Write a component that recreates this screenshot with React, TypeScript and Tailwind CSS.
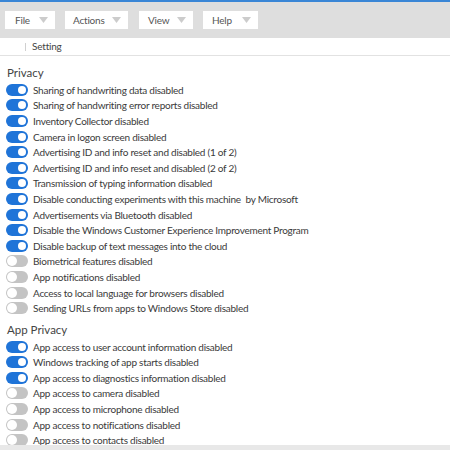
import React from "react";

const privacy: [string, boolean][] = [
  ["Sharing of handwriting data disabled", true],
  ["Sharing of handwriting error reports disabled", true],
  ["Inventory Collector disabled", true],
  ["Camera in logon screen disabled", true],
  ["Advertising ID and info reset and disabled (1 of 2)", true],
  ["Advertising ID and info reset and disabled (2 of 2)", true],
  ["Transmission of typing information disabled", true],
  ["Disable conducting experiments with this machine  by Microsoft", true],
  ["Advertisements via Bluetooth disabled", true],
  ["Disable the Windows Customer Experience Improvement Program", true],
  ["Disable backup of text messages into the cloud", true],
  ["Biometrical features disabled", false],
  ["App notifications disabled", false],
  ["Access to local language for browsers disabled", false],
  ["Sending URLs from apps to Windows Store disabled", false],
];

const appPrivacy: [string, boolean][] = [
  ["App access to user account information disabled", true],
  ["Windows tracking of app starts disabled", true],
  ["App access to diagnostics information disabled", true],
  ["App access to camera disabled", false],
  ["App access to microphone disabled", false],
  ["App access to notifications disabled", false],
  ["App access to contacts disabled", false],
];

function Toggle({ on }: { on: boolean }) {
  return on ? (
    <div className="w-[22px] h-[12px] rounded-full bg-[#1f74d8] flex items-center justify-end pr-[2px] shrink-0">
      <div className="w-[8px] h-[8px] rounded-full bg-white" />
    </div>
  ) : (
    <div className="w-[22px] h-[12px] rounded-full bg-[#c4c4c4] flex items-center justify-start pl-[1px] shrink-0">
      <div className="w-[10px] h-[10px] rounded-full bg-white" />
    </div>
  );
}

function Row({ label, on }: { label: string; on: boolean }) {
  return (
    <div className="h-[15.6px] flex items-center pl-[6px] gap-[5px]">
      <Toggle on={on} />
      <span className="text-[10px] tracking-[-0.25px] text-[#3a3a3a] whitespace-pre leading-none">{label}</span>
    </div>
  );
}

function Caret() {
  return (
    <svg width="9" height="6" viewBox="0 0 9 6">
      <path d="M0 0 L9 0 L4.5 6 Z" fill="#cccccc" />
    </svg>
  );
}

export default function App() {
  return (
    <div
      className="w-[450px] h-[450px] overflow-hidden flex flex-col bg-white"
      style={{ fontFamily: 'Lato, "Open Sans", sans-serif' }}
    >
      <div className="h-[2px] bg-[#3a86d6] shrink-0" />
      <div className="h-[36px] bg-[#dedede] flex items-center shrink-0">
        <div className="flex items-center">
          <div className="w-[5px]" />
          <div className="h-[18px] bg-white flex items-center justify-between pl-[10px] pr-[7px] w-[50px]">
            <span className="text-[10px] tracking-[-0.2px] text-[#555]">File</span>
            <Caret />
          </div>
          <div className="w-[10px]" />
          <div className="h-[18px] bg-white flex items-center justify-between pl-[8px] pr-[7px] w-[63px]">
            <span className="text-[10px] tracking-[-0.2px] text-[#555]">Actions</span>
            <Caret />
          </div>
          <div className="w-[11px]" />
          <div className="h-[18px] bg-white flex items-center justify-between pl-[9px] pr-[7px] w-[54px]">
            <span className="text-[10px] tracking-[-0.2px] text-[#555]">View</span>
            <Caret />
          </div>
          <div className="w-[10px]" />
          <div className="h-[18px] bg-white flex items-center justify-between pl-[9px] pr-[7px] w-[55px]">
            <span className="text-[10px] tracking-[-0.2px] text-[#555]">Help</span>
            <Caret />
          </div>
        </div>
      </div>
      <div className="h-[18px] bg-white border-b border-[#e2e2e2] flex items-center shrink-0">
        <div className="w-[26px] h-full flex items-center justify-end">
          <div className="w-px h-[8px] bg-[#d0d0d0]" />
        </div>
        <span className="pl-[6px] text-[10px] tracking-[-0.2px] text-[#444]">Setting</span>
      </div>
      <div className="flex-1 overflow-hidden bg-white">
        <div className="pt-[8px]">
          <div className="h-[18px] flex items-center pl-[7px] text-[11.5px] text-[#444]">Privacy</div>
          {privacy.map(([l, o]) => (
            <Row key={l} label={l} on={o} />
          ))}
        </div>
        <div className="pt-[5px]">
          <div className="h-[18px] flex items-center pl-[7px] text-[11.5px] text-[#444]">App Privacy</div>
          {appPrivacy.map(([l, o]) => (
            <Row key={l} label={l} on={o} />
          ))}
        </div>
      </div>
      <div className="h-[5px] bg-[#e8e8e8] shrink-0" />
    </div>
  );
}
